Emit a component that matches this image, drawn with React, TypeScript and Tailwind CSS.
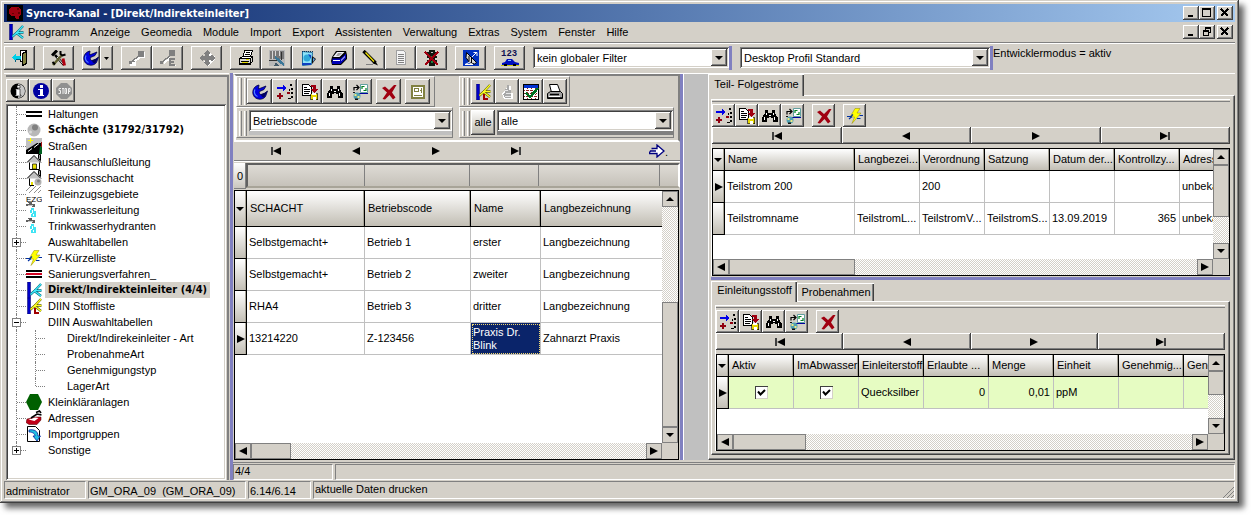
import React from 'react';
import type { ReactNode } from 'react';

const RAISED = 'bg-[#d4d0c8] shadow-[inset_-1px_-1px_0_#404040,inset_1px_1px_0_#fff,inset_-2px_-2px_0_#808080]';
const SUNKEN = 'shadow-[inset_1px_1px_0_#808080,inset_-1px_-1px_0_#fff,inset_2px_2px_0_#404040,inset_-2px_-2px_0_#d4d0c8]';
const GROUP = 'border border-t-white border-l-white border-r-[#808080] border-b-[#808080]';
const CHECKER = 'bg-[repeating-conic-gradient(#d4d0c8_0_25%,#fff_0_50%)] bg-[length:2px_2px]';

/* ---------- icons ---------- */

function Svg({ children, size = 16, smooth = false }: { children: ReactNode; size?: number; smooth?: boolean }) {
  return (
    <svg width={size} height={size} viewBox="0 0 16 16" fill="none" aria-hidden="true" className="shrink-0" shapeRendering={smooth ? 'auto' : 'crispEdges'}>
      {children}
    </svg>
  );
}

const icons: Record<string, ReactNode> = {
  app: (
    <Svg>
      <path fill="#000" d="M0 0h16v16H0z" />
      <path fill="#a00010" d="M4 2h7l3 3v5l-2 1v3H9l-1-3H4L2 8V4z" />
      <path fill="#600" d="M10 3h2v2h-2zM5 8h2v1H5zM11 7h2v2h-2z" />
    </Svg>
  ),
  branch: (
    <Svg smooth>
      <path fill="#0000c8" stroke="#000060" strokeWidth=".5" d="M1.500 0h3v16h-3z" />
      <path stroke="#006c80" strokeWidth="2.400" d="M4.500 12.500L8.500 9l6.500-7M8 8.500h7.500M8.500 9l6.500 5" />
      <path stroke="#40e8f8" strokeWidth="1.200" d="M4.500 12.500L8.500 9l6.500-7M8 8.500h7.500M8.500 9l6.500 5" />
    </Svg>
  ),
  branchYellow: (
    <Svg smooth>
      <path fill="#0000c8" stroke="#000060" strokeWidth=".5" d="M1.500 0h3v16h-3z" />
      <path stroke="#606000" strokeWidth="2.400" d="M4.500 11.500L8.500 8l6.500-7M8 7.500h7.500M8.500 8l6.500 5" />
      <path stroke="#ffff20" strokeWidth="1.200" d="M4.500 11.500L8.500 8l6.500-7M8 7.500h7.500M8.500 8l6.500 5" />
      <path fill="#a00000" d="M8 10h2v4h3v2H8z" />
    </Svg>
  ),
  exit: (
    <Svg>
      <path fill="#fff" stroke="#000" d="M8.500.5h6v11h-6z" />
      <path fill="#808040" stroke="#000" d="M10.500 3.500l4-2v12l-4 2z" />
      <path fill="#00d0e8" d="M0 7l4-4v3h5v3H4v3z" />
      <path stroke="#006080" d="M4 9.500h5M3.500 10v2" />
    </Svg>
  ),
  tools: (
    <Svg smooth>
      <path stroke="#000" strokeWidth="2.500" d="M4 5l9 10" />
      <path stroke="#fff" strokeWidth="1" d="M6 7l6 7" />
      <path stroke="#606030" strokeWidth="2.500" d="M11 5l-9 10" />
      <path stroke="#000" strokeWidth="3" d="M1 5.500l5-5" />
      <path stroke="#000" strokeWidth="2" d="M9.500 1v3l2 1.500 3-1M1.500 12l2.500 2.500" />
      <path stroke="#b00010" strokeWidth="3" d="M12 8.500l1.500 7" />
    </Svg>
  ),
  swirl: (
    <Svg smooth>
      <path fill="#0000e0" stroke="#000040" strokeWidth=".8" d="M7 1C1 2-1 9 2.500 13c3 3 8.500 3 11-.5L15.500 7l-3 2.500L9 10.500c-1.500 0-2-1.500-1.500-3L12 5.500 14 2 9 4l-2.500 1z" />
      <path fill="#000060" d="M9 10.500l6-3-2.500 5.500c-2 1-3-.5-3.500-2.500z" />
      <path stroke="#5080ff" strokeWidth="1.200" d="M3 5.500c-1.500 3 0 6 2.500 7" />
    </Svg>
  ),
  node: (
    <Svg>
      <path fill="#fff" d="M10 2h6v6h-6zM1 12h6v4H1z" />
      <path stroke="#fff" strokeWidth="2" d="M5 12l6-5" />
      <path fill="#808080" d="M9 1h6v6H9zM0 11h3v3H0zM4 11h2v1H4z" />
      <path stroke="#808080" strokeWidth="1.500" d="M3 11l7-5" />
    </Svg>
  ),
  nodeE: (
    <Svg>
      <path stroke="#fff" strokeWidth="2" d="M4 13l6-5M10 16h6" />
      <path fill="#808080" d="M9 0h6v6H9zM0 11h3v3H0zM9 8h6v2h-4v1h3v2h-3v1h4v2H9z" />
      <path stroke="#808080" strokeWidth="1.500" d="M3 11l7-5" />
    </Svg>
  ),
  move: (
    <Svg>
      <path fill="#fff" d="M9 1l4 4v3l3-2v3l-3 4-4 3-4-4z" />
      <path fill="#808080" d="M8 0l3 3v1h-1v2h2V5h1l3 3-3 3h-1v-1h-2v2h1v1l-3 3-3-3v-1h1v-2H4v1H3L0 8l3-3h1v1h2V4H5V3z" />
    </Svg>
  ),
  printer: (
    <Svg>
      <path fill="#fff" stroke="#000" d="M5.500 6.500l1-6h8l-2 6zM1.500 8.500l3-2h10l-2 2v6h-11z" />
      <path fill="#d8d8d0" stroke="#000" d="M1.500 8.500h11v5h-11zM12.500 8.500l2-2v5l-2 2z" />
      <path stroke="#000" d="M8 2.500h4M7 4.500h5M3 11.500h8" />
      <path fill="#e0d800" d="M8 9h3v1H8zM4 12h6v1H4z" />
    </Svg>
  ),
  plan: (
    <Svg>
      <path fill="#b8b8b8" d="M0 0h16v16H0z" />
      <path fill="#787878" d="M1 1h14v8H1z" />
      <path stroke="#d8d8d8" d="M3.500 1v8M6.500 1v5M10.500 1v5" />
      <path stroke="#303030" d="M0 10.500h9M12.500 2v8" />
      <path stroke="#3c7898" strokeWidth="2.500" d="M6 7l9 8" />
      <path fill="#405868" d="M7 12l3 4H5z" />
    </Svg>
  ),
  globe: (
    <Svg smooth>
      <path fill="#90e4f8" stroke="#2070a0" d="M2.500 1.500l10 1-1 12-9 1z" />
      <path stroke="#103050" strokeDasharray="1 1" d="M2 1.500h11" />
      <circle cx="7" cy="8" r="3.500" fill="#30a8d8" />
      <path fill="#1040c0" d="M2 13h9v2H2zM8 4l3 1v4z" />
      <path fill="#101010" d="M12 6l4 3-4 5z" />
      <path fill="#60a0e0" d="M13 8l2 1-2 3z" />
    </Svg>
  ),
  scanner: (
    <Svg smooth>
      <path fill="#000" d="M5 1h10l1 4v4l-6 6H1l-1-4 1-4z" />
      <path fill="#f0f0f8" d="M6 2h7.500l-5 5H2z" />
      <path fill="#0000b8" d="M1.500 8.500h8l5.500-5v5l-5.500 5.500H1z" />
      <path fill="#fff" d="M2 10h7v1H2zM10 10l4-4v1l-4 4z" />
      <path fill="#a0a0a0" d="M7 3h4L8 6H5z" />
    </Svg>
  ),
  pencil: (
    <Svg smooth>
      <path stroke="#000" strokeWidth="3.400" d="M1.500 1l12 12" />
      <path stroke="#f0e000" strokeWidth="1.400" d="M3.500 2.500l9 9.500" />
      <path fill="#000" d="M13 10.500l3 5-5.500-2.500z" />
      <path stroke="#808080" d="M4 14.500h7" />
    </Svg>
  ),
  doc: (
    <Svg>
      <path fill="#f4f4f4" stroke="#a0a0a0" d="M3.500.5h7l2 2v12h-9z" />
      <path stroke="#808080" d="M5 4.500h6M5 6.500h6M5 8.500h6M5 10.500h6M5 12.500h6" />
    </Svg>
  ),
  traffic: (
    <Svg>
      <path fill="#101810" d="M5 0h6v16H5zM2 2h12v2H2zM3 6h10v2H3zM3 10h10v2H3z" />
      <path fill="#208040" d="M7 6h2v2H7zM7 11h2v2H7z" />
      <path fill="#c0c0c0" d="M7 2h2v1H7z" />
      <path stroke="#a00010" strokeWidth="2" d="M1 2l13 13M14 2L1 15" />
    </Svg>
  ),
  dish: (
    <Svg smooth>
      <path fill="#0030c0" d="M0 0h16v16H0z" />
      <path fill="#d8d8d8" stroke="#000" d="M3.500 2.500l10 10-2 1.500-5-1.500-3.500-5z" />
      <path stroke="#000" d="M4 3l9 9M6 6v5M8.500 8v5" />
      <path stroke="#fff" d="M9 7l5-5M10.500 2.500H14V6M2 14.500l4-2 4 2z" />
    </Svg>
  ),
  car: (
    <svg width="18" height="18" viewBox="0 0 18 18" aria-hidden="true" className="shrink-0">
      <text x="0" y="7" fontFamily="Liberation Mono, monospace" fontWeight="700" fontSize="9" fill="#101050">123</text>
      <path fill="#0010c0" d="M1 14l3-1 2-3h5l3 3 4 1v2H1z" />
      <path fill="#c8c800" d="M0 16h18v1H0z" />
      <path fill="#000" d="M3 15h3v2H3zM12 15h3v2h-3z" />
      <path fill="#80c0ff" d="M7 11h3v1H7z" />
    </svg>
  ),
  addField: (
    <Svg>
      <path fill="#0000e8" d="M0 3h6V1l4 3-4 3V5H0z" />
      <path fill="#900010" d="M2 9h2v2h2v2H4v2H2v-2H0v-2h2z" />
      <path fill="#000" d="M13 0h2v2h-2zM14 4h2v2h-2zM12 5h1v2h-1zM14 8h2v2h-2zM14 12h2v2h-2zM11 14h3v1h-3z" />
      <path fill="#900010" d="M10 8h3v2h-3z" />
    </Svg>
  ),
  copySave: (
    <Svg>
      <path fill="#fff" stroke="#000" d="M.5.5h6l3 3v8h-9z" />
      <path stroke="#000" d="M2 3.500h3M2 5.500h6M2 7.500h6M2 9.500h5" />
      <path fill="#a00010" d="M9 1h5v4h2l-4 4-3-4h2V3H9z" />
      <path fill="#e8d800" stroke="#000" strokeWidth=".6" d="M8.500 9.500h7v6h-7z" />
      <path fill="#fff" d="M10 9h4v2h-4zM11 13h3v3h-3z" />
    </Svg>
  ),
  find: (
    <Svg>
      <path fill="#000" d="M3 2h3v3h4V2h3v3l3 5v4h-5v-4H9V9H7v1H5v4H0v-4l3-5z" />
      <path fill="#fff" d="M4 5h1v2H4zM2 9h1v3H2zM11 5h1v2h-1zM12 9h1v3h-1zM7 7h2v1H7z" />
    </Svg>
  ),
  clone: (
    <Svg smooth>
      <path fill="#fff" stroke="#60a0a0" d="M8.500.5h7v8h-7z" />
      <path stroke="#008020" strokeWidth="1.200" d="M10 5V2.500h2.500M14 4v2.500h-2.500" />
      <path stroke="#000" strokeWidth="1.200" d="M2 6.500v-3h4M4.500 1L7 3.500 4.500 6" />
      <path fill="#0000a0" d="M6 9h10v1H6z" />
      <circle cx="5" cy="12" r="3.500" fill="#50a0b0" />
      <path fill="#f0e880" d="M2.500 10h2v2h-2zM5.500 12h2v2h-2z" />
      <path fill="#101010" d="M3 14.500h3V16H3zM1 8h2v1H1z" />
    </Svg>
  ),
  cross: (
    <Svg smooth>
      <path fill="#a00010" d="M1 4l3-1.500L8 6l5-5h2.500L11 8.500l3.500 5L12 15.500 8.500 11 4 15.500 1.500 15 6 8.500z" />
    </Svg>
  ),
  form: (
    <Svg>
      <path fill="#fff" stroke="#808040" strokeWidth="2" d="M2 2h12v12H2z" />
      <path stroke="#808040" d="M4 4.500h4M4.500 4v4M8.500 4v4M4 7.500h5M10 6.500h2M4 11.500h8M11.500 4v5" />
    </Svg>
  ),
  hand: (
    <Svg>
      <path fill="#fff" d="M9 2h3v7h2v6H5l-2-5z" />
      <path fill="#a8a8a8" d="M8 1h2v5h2v8H6l-2-4 2-1V5h2z" />
      <path stroke="#e8e8e8" d="M6 6.500h3M7 9.500h5M6 12.500h6" />
    </Svg>
  ),
  gridCheck: (
    <Svg>
      <path fill="#fff" stroke="#000" d="M.5.5h15v15H.5z" />
      <path fill="#0030d0" d="M1 1h14v3H1z" />
      <path stroke="#902020" strokeDasharray="1 1" d="M1 6.500h14M1 9.500h14M1 12.500h14M4.500 4v11M8.500 4v11M12.500 4v11" />
      <path stroke="#007020" strokeWidth="2.500" d="M3 9l4 4 8-9" />
    </Svg>
  ),
  printer2: (
    <Svg smooth>
      <path fill="#fff" stroke="#000" d="M4.500 8.500l-2-8h8l3 8z" />
      <path fill="#a0a0a0" stroke="#000" d="M.5 9.500l3-2h10l2 2v5H.500z" />
      <path stroke="#000" strokeWidth="1.500" d="M1 14h14M3 10.500h9" />
      <path stroke="#fff" d="M2 12.500h11" />
    </Svg>
  ),
  infoBw: (
    <Svg smooth>
      <circle cx="8" cy="8" r="7.500" fill="#000" />
      <path fill="#c8c8c8" d="M8 1a7 7 0 010 14z" />
      <path fill="#fff" stroke="#000" strokeWidth=".6" d="M6 6h4v6h1v1H5v-1h1V7H5zM7 2.500h3V5H7z" />
    </Svg>
  ),
  infoBlue: (
    <Svg smooth>
      <circle cx="8" cy="8" r="8" fill="#0000a0" />
      <path fill="#fff" d="M5 6h5v6h1v1H5v-1h2V7H5zM7 2h3v3H7z" />
    </Svg>
  ),
  stop: (
    <Svg smooth>
      <path fill="#909090" d="M5 0h6l5 5v6l-5 5H5l-5-5V5z" />
      <path stroke="#f0f0f0" strokeWidth="1" d="M5 5.500H3v2h1.500v3H2.500M6 5.500h2M7 5v6M9 5.500h1.500v5H9zM12.500 11V5.500H14v3h-1.500" />
    </Svg>
  ),
  lightning: (
    <Svg smooth>
      <path fill="#ffff00" stroke="#908800" strokeWidth=".5" d="M8 .5h5L10 5h4L5 15.500 7.500 9H3z" />
      <path stroke="#0030a0" strokeWidth="1.200" d="M0 8.500h4l2-2M16 7.500h-3.500M2 11l3-2.500M10 10.500h3.500" />
    </Svg>
  ),
  lines: (
    <Svg>
      <path fill="#000" d="M0 5h16v2H0zM0 9h16v2H0z" />
    </Svg>
  ),
  ball: (
    <Svg smooth>
      <circle cx="8" cy="8" r="6.500" fill="#b8b8b8" />
      <circle cx="9" cy="5.500" r="3" fill="#808080" />
      <circle cx="4.500" cy="10" r="1.500" fill="#d8d8d8" />
    </Svg>
  ),
  road: (
    <Svg smooth>
      <path fill="#c0c0c0" d="M0 0h16v16H0z" />
      <path fill="#000" d="M0 12l11-7h5v8l-3 3H0z" />
      <path fill="#006020" d="M14 8h2v8h-3z" />
      <path fill="#a01010" d="M15 4h1v5h-1z" />
      <path stroke="#fff" d="M2 13.500l4-3M8 9.500l5-4" />
      <path stroke="#ffff00" d="M4.500 0v5M2 2.500h5" />
    </Svg>
  ),
  house: (
    <Svg smooth>
      <path fill="#fff" stroke="#000" d="M3.500 8v7.500h10V8" />
      <path fill="#c0c0c0" stroke="#000" d="M1 8.500l7-7 7 7" />
      <path fill="#a0a0a0" stroke="#000" d="M12.500.5h2v6l-2-2z" />
      <path fill="#e8e000" stroke="#000" strokeWidth=".7" d="M6.500 10h4v5h-4z" />
    </Svg>
  ),
  house2: (
    <Svg smooth>
      <path fill="#fff" stroke="#000" d="M8 15.500H3.500V8L8 3l5 5" />
      <path fill="#c0c0c0" stroke="#000" d="M1 8.500l7-7 7 7" />
      <path fill="#a0a0a0" stroke="#000" d="M12.500.5h2v6l-2-2z" />
      <path fill="#e8e000" d="M5 12h2v3H5z" />
      <circle cx="12" cy="12" r="3.500" fill="#b0b0b0" />
      <circle cx="12.500" cy="11" r="1.500" fill="#808080" />
    </Svg>
  ),
  ezg: (
    <svg width="16" height="16" viewBox="0 0 16 16" aria-hidden="true" className="shrink-0">
      <path fill="none" stroke="#909090" d="M0 5l5-5M3 7l7-7M8 7l7-7M12 7l3-3" />
      <text x="0" y="15.500" fontSize="8" fontFamily="Liberation Sans, sans-serif" fill="#000">EZG</text>
    </svg>
  ),
  tap: (
    <Svg>
      <path fill="#606060" d="M1 0h5v2h3v3H6V4H0V2h3z" />
      <path fill="#c8c8c8" d="M2 3h5v1H2z" />
      <path fill="#40e4f4" d="M5 6h3v3h2v6H5v-4H4V8h1z" />
      <path fill="#fff" d="M6 8h1v3H6zM7 12h1v2H7zM5 11h1v1H5z" />
    </Svg>
  ),
  redLine: (
    <Svg>
      <path fill="#000" d="M0 4h16v8H0z" />
      <path fill="#d00020" d="M0 7h16v2H0z" />
      <path fill="#fff" d="M0 6h16v1H0zM0 9h16v1H0z" />
    </Svg>
  ),
  hexagon: (
    <Svg smooth>
      <path fill="#006000" d="M4 0h8l4 8-4 8H4L0 8z" />
    </Svg>
  ),
  phone: (
    <Svg smooth>
      <path fill="#c00018" stroke="#400" strokeWidth=".5" d="M1 9l9-2h5v3l-4 4.500H3l-3-2z" />
      <path fill="#fff" d="M2.500 9.500l7-2 3 .5-4 3z" />
      <path stroke="#000" strokeWidth="1.600" d="M5 8l6-4 4.500 1M10 2.500L13.500 1 15 3" />
    </Svg>
  ),
  importDoc: (
    <Svg smooth>
      <path fill="#fff" stroke="#000" d="M1.500.5h8l4 4v11h-12z" />
      <path fill="#20c0e0" stroke="#0020a0" strokeWidth=".8" d="M3 4c5-1 9 1 9 6h2.500L11 15l-4-5h2c0-2-2-4-6-4z" />
    </Svg>
  ),
};

function Triangle({ dir, bar = false }: { dir: 'left' | 'right' | 'up' | 'down'; bar?: boolean }) {
  const shapes = {
    left: 'M8 0v8L0 4z',
    right: 'M0 0v8l8-4z',
    up: 'M0 6h8L4 2z',
    down: 'M0 2h8L4 6z',
  };
  return (
    <span className="flex items-center">
      {bar && dir === 'left' && <span className="h-2 w-0.5 bg-[#404040]" />}
      <svg width="8" height="8" viewBox="0 0 8 8" aria-hidden="true">
        <path d={shapes[dir]} fill="#000" />
      </svg>
      {bar && dir === 'right' && <span className="h-2 w-0.5 bg-[#404040]" />}
    </span>
  );
}

/* ---------- controls ---------- */

function ToolButton({ icon, label, className = 'h-6 w-[31px]' }: { icon: string; label: string; className?: string }) {
  return (
    <button type="button" aria-label={label} className={`flex shrink-0 items-center justify-center ${RAISED} ${className}`}>
      {icons[icon]}
    </button>
  );
}

function Combo({ label, value, className }: { label: string; value: string; className: string }) {
  return (
    <div className={`relative shrink-0 ${className}`}>
      <select aria-label={label} className={`h-[21px] w-full appearance-none bg-white pt-px pl-1 text-[11px] leading-[17px] text-black outline-none ${SUNKEN}`}>
        <option>{value}</option>
      </select>
      <span className={`pointer-events-none absolute top-0.5 right-0.5 flex h-[17px] w-4 items-center justify-center ${RAISED}`}>
        <Triangle dir="down" />
      </span>
    </div>
  );
}

function Gripper() {
  return (
    <div className="flex w-2 shrink-0 gap-0.5 self-stretch py-px">
      <span className="w-[3px] border-x border-l-white border-r-[#808080]" />
      <span className="w-[3px] border-x border-l-white border-r-[#808080]" />
    </div>
  );
}

type WindowGlyph = 'min' | 'max' | 'restore' | 'close';

function WindowButton({ kind, label }: { kind: WindowGlyph; label: string }) {
  const glyph = {
    min: <path d="M2 7h5v2H2z" fill="#000" />,
    max: <path d="M.5.5h8v8h-8zM1 1.500h8" stroke="#000" />,
    restore: <path d="M3.500 3V.5h5v5H6M3 1.500h6M1.500 3.500h5v5h-5zM1 4.500h6" stroke="#000" />,
    close: <path d="M1 1l7 7M8 1L1 8" stroke="#000" strokeWidth="1.500" />,
  }[kind];
  return (
    <button type="button" aria-label={label} className={`flex h-3.5 w-4 items-center justify-center ${RAISED}`}>
      <svg width="10" height="10" viewBox="0 0 10 10" fill="none" shapeRendering="crispEdges" aria-hidden="true">{glyph}</svg>
    </button>
  );
}

function WindowButtons({ middle }: { middle: WindowGlyph }) {
  return (
    <div className="ml-auto flex pr-0.5">
      <WindowButton kind="min" label="Minimieren" />
      <WindowButton kind={middle} label="Maximieren" />
      <span className="w-0.5" />
      <WindowButton kind="close" label="Schließen" />
    </div>
  );
}

const SCROLL_BUTTON = 'flex size-4 shrink-0 items-center justify-center border border-[#808080] bg-[#d4d0c8]';

function ScrollBar({ vertical = false, start, size }: { vertical?: boolean; start: number; size: number }) {
  const at = (n: number) => (vertical ? { height: `${n}%` } : { width: `${n}%` });
  return (
    <div className={`flex ${vertical ? 'min-h-0 w-4 flex-1 flex-col' : 'h-4 w-full'} ${CHECKER}`}>
      <button type="button" aria-label="Zurück blättern" className={SCROLL_BUTTON}>
        <Triangle dir={vertical ? 'up' : 'left'} />
      </button>
      <div className={`flex min-h-0 flex-1 ${vertical ? 'flex-col' : ''}`}>
        <div style={at(start)} />
        <div style={at(size)} className="border border-[#808080] bg-[#d4d0c8]" />
      </div>
      <button type="button" aria-label="Weiter blättern" className={SCROLL_BUTTON}>
        <Triangle dir={vertical ? 'down' : 'right'} />
      </button>
    </div>
  );
}

interface Column {
  label: string;
  width: number;
  align?: 'right' | 'center';
}

interface GridProps {
  columns: Column[];
  rows: ReactNode[][];
  active: number;
  tall?: boolean;
  rowColor?: string;
  selected?: number;
  v: [number, number];
  h: [number, number];
}

const HEAD = 'border-r border-b border-black bg-linear-to-b from-white to-[#c2beb4] font-normal shadow-[inset_-1px_0_0_#a8a498]';

function Grid({ columns, rows, active, tall = false, rowColor = 'bg-white', selected, v, h }: GridProps) {
  const total = columns.reduce((sum, c) => sum + c.width, 12);
  return (
    <div className="flex min-h-0 flex-1 border border-black bg-white">
      <div className="flex min-w-0 flex-1 flex-col">
        <div className="min-h-0 flex-1 overflow-hidden">
          <table className="table-fixed border-separate border-spacing-0 text-left whitespace-nowrap" style={{ width: total }}>
            <colgroup>
              <col className="w-3" />
              {columns.map((c) => (
                <col key={c.label} style={{ width: c.width }} />
              ))}
            </colgroup>
            <thead>
              <tr className={tall ? 'h-9' : 'h-[22px]'}>
                <th className={`pl-px ${HEAD}`}><Triangle dir="down" /></th>
                {columns.map((c) => (
                  <th key={c.label} className={`pr-0 pl-[3px] ${HEAD}`}>{c.label}</th>
                ))}
              </tr>
            </thead>
            <tbody>
              {rows.map((row, r) => (
                <tr key={r} className={`h-8 ${rowColor}`}>
                  <td className={`pl-0.5 ${HEAD}`}>{r === active && <Triangle dir="right" />}</td>
                  {row.map((cell, c) => {
                    const picked = r === active && c === selected;
                    const align = columns[c].align === 'right' ? 'pr-[3px] text-right' : columns[c].align === 'center' ? 'text-center' : 'pr-0 pl-0.5';
                    return (
                      <td
                        key={c}
                        className={`border-r border-b border-[#c0c0c0] ${align} ${picked ? 'bg-[#0a246a] leading-[13px] whitespace-normal text-white outline outline-dotted -outline-offset-2 outline-[#f0d870]' : ''}`}
                      >
                        {cell}
                      </td>
                    );
                  })}
                </tr>
              ))}
            </tbody>
          </table>
        </div>
        <ScrollBar start={h[0]} size={h[1]} />
      </div>
      <div className="flex w-4 shrink-0 flex-col bg-[#d4d0c8] pb-4">
        <ScrollBar vertical start={v[0]} size={v[1]} />
      </div>
    </div>
  );
}

function NavButtons() {
  const cls = `flex h-[17px] flex-1 items-center justify-center ${RAISED}`;
  return (
    <div className="flex">
      <button type="button" aria-label="Erster" className={cls}><Triangle dir="left" bar /></button>
      <button type="button" aria-label="Vorheriger" className={cls}><Triangle dir="left" /></button>
      <button type="button" aria-label="Nächster" className={cls}><Triangle dir="right" /></button>
      <button type="button" aria-label="Letzter" className={cls}><Triangle dir="right" bar /></button>
    </div>
  );
}

function DetailTools({ extra = false }: { extra?: boolean }) {
  const size = 'h-[23px] w-[23px]';
  return (
    <div className="flex border-t border-[#808080] pt-0.5">
      <ToolButton icon="addField" label="Hinzufügen" className={size} />
      <ToolButton icon="copySave" label="Kopieren" className={size} />
      <ToolButton icon="find" label="Suchen" className={size} />
      <ToolButton icon="clone" label="Aktualisieren" className={size} />
      <span className="w-2" />
      <ToolButton icon="cross" label="Löschen" className={size} />
      {extra && <span className="w-2" />}
      {extra && <ToolButton icon="lightning" label="Ausführen" className={size} />}
    </div>
  );
}

function Tick({ label }: { label: string }) {
  return (
    <span className="inline-grid size-[13px] align-middle">
      <input type="checkbox" defaultChecked aria-label={label} className="peer col-start-1 row-start-1 size-[13px] appearance-none bg-white shadow-[inset_1px_1px_0_#404040,inset_-1px_-1px_0_#d4d0c8]" />
      <svg viewBox="0 0 13 13" fill="none" aria-hidden="true" className="pointer-events-none invisible col-start-1 row-start-1 size-[13px] peer-checked:visible">
        <path d="M3 5.500l2.500 3L10 4" stroke="#000" strokeWidth="2" />
      </svg>
    </span>
  );
}

/* ---------- tree ---------- */

interface TreeItem {
  label: string;
  icon?: string;
  bold?: boolean;
  selected?: boolean;
  expander?: '+' | '-';
  child?: boolean;
  last?: boolean;
}

const tree: TreeItem[] = [
  { label: 'Haltungen', icon: 'lines' },
  { label: 'Schächte (31792/31792)', icon: 'ball', bold: true },
  { label: 'Straßen', icon: 'road' },
  { label: 'Hausanschlußleitung', icon: 'house' },
  { label: 'Revisionsschacht', icon: 'house2' },
  { label: 'Teileinzugsgebiete', icon: 'ezg' },
  { label: 'Trinkwasserleitung', icon: 'tap' },
  { label: 'Trinkwasserhydranten', icon: 'tap' },
  { label: 'Auswahltabellen', expander: '+' },
  { label: 'TV-Kürzelliste', icon: 'lightning' },
  { label: 'Sanierungsverfahren_', icon: 'redLine' },
  { label: 'Direkt/Indirekteinleiter (4/4)', icon: 'branch', bold: true, selected: true },
  { label: 'DIIN Stoffliste', icon: 'branchYellow' },
  { label: 'DIIN Auswahltabellen', expander: '-' },
  { label: 'Direkt/Indirekeinleiter - Art', child: true },
  { label: 'ProbenahmeArt', child: true },
  { label: 'Genehmigungstyp', child: true },
  { label: 'LagerArt', child: true, last: true },
  { label: 'Kleinkläranlagen', icon: 'hexagon' },
  { label: 'Adressen', icon: 'phone' },
  { label: 'Importgruppen', icon: 'importDoc' },
  { label: 'Sonstige', expander: '+', last: true },
];

function Stub({ last }: { last?: boolean }) {
  return (
    <span className="flex h-4 w-2.5 shrink-0">
      <span className={`w-px border-l border-dotted border-[#808080] ${last ? 'h-2' : 'h-4'}`} />
      <span className="mt-2 h-px flex-1 border-t border-dotted border-[#808080]" />
    </span>
  );
}

function TreeRow({ item }: { item: TreeItem }) {
  return (
    <li className="relative flex h-4 items-center pl-2">
      {item.child && <span className="h-4 w-[19px] shrink-0 border-l border-dotted border-[#808080]" />}
      <Stub last={item.last} />
      {item.expander && (
        <button type="button" aria-label={`${item.label} umschalten`} className="absolute left-1 flex size-[9px] items-center justify-center border border-[#808080] bg-white">
          <svg width="5" height="5" viewBox="0 0 5 5" aria-hidden="true" shapeRendering="crispEdges">
            <path d={item.expander === '+' ? 'M0 2h5v1H0zM2 0h1v5H2z' : 'M0 2h5v1H0z'} />
          </svg>
        </button>
      )}
      {item.icon ? icons[item.icon] : <span className="w-4 shrink-0" />}
      <span className={`ml-[3px] px-[3px] leading-4 whitespace-nowrap ${item.bold ? "font-['DejaVu_Sans_Condensed','DejaVu_Sans',sans-serif] font-bold" : ''} ${item.selected ? 'bg-[#d4d0c8]' : ''}`}>
        {item.label}
      </span>
    </li>
  );
}

function TreePanel() {
  return (
    <aside className="flex w-[225px] shrink-0 flex-col border-t border-white pt-px pl-0.5">
      <div className="flex flex-1 flex-col border-t-2 border-r-2 border-t-[#808080] border-r-[#808080] pr-px">
        <div className="flex pt-0.5">
          <ToolButton icon="infoBw" label="Info" className="size-[23px]" />
          <ToolButton icon="infoBlue" label="Information" className="size-[23px]" />
          <ToolButton icon="stop" label="Stopp" className="size-[23px]" />
        </div>
        <ul className={`mt-0.5 flex-1 bg-white p-0.5 ${SUNKEN}`}>
          {tree.map((item) => (
            <TreeRow key={item.label} item={item} />
          ))}
        </ul>
      </div>
    </aside>
  );
}

/* ---------- centre ---------- */

function CenterPanel() {
  const size = 'size-[25px]';
  const small = 'h-[25px] w-6';
  return (
    <section className="flex w-[447px] shrink-0 flex-col pl-px">
      <div className="grid shrink-0 grid-cols-[223px_1fr] border-2 border-t-[#808080] border-r-[#808080] border-b-white border-l-white pr-1 pb-0.5">
        <div className={`flex w-[199px] items-center pl-0.5 ${GROUP} h-[31px]`}>
          <Gripper />
          <ToolButton icon="swirl" label="Neu laden" className={size} />
          <ToolButton icon="addField" label="Hinzufügen" className={size} />
          <ToolButton icon="copySave" label="Kopieren" className={size} />
          <ToolButton icon="find" label="Suchen" className={size} />
          <ToolButton icon="clone" label="Aktualisieren" className={size} />
          <span className="w-1" />
          <ToolButton icon="cross" label="Löschen" className={size} />
          <span className="w-1" />
          <ToolButton icon="form" label="Formular" className={size} />
        </div>
        <div className={`flex w-[111px] items-center pl-0.5 ${GROUP} h-[31px]`}>
          <Gripper />
          <span className="w-px" />
          <ToolButton icon="branchYellow" label="Stoffliste" className={small} />
          <ToolButton icon="hand" label="Zeigen" className={small} />
          <ToolButton icon="gridCheck" label="Auswahl" className={small} />
          <ToolButton icon="printer2" label="Drucken" className={small} />
        </div>
        <div className={`flex h-[31px] w-[217px] items-start pt-0.5 pl-0.5 ${GROUP}`}>
          <Gripper />
          <div className="ml-0.5 flex-1 bg-[#c0c0c0] pb-1">
            <Combo label="Suchfeld" value="Betriebscode" className="w-full" />
          </div>
        </div>
        <div className={`flex h-[31px] w-full items-start pt-0.5 pl-0.5 ${GROUP}`}>
          <Gripper />
          <button type="button" className={`ml-px h-[25px] w-6 shrink-0 bg-linear-to-b from-white to-[#bcb8ac] ${RAISED}`}>alle</button>
          <div className="ml-0.5 flex-1 bg-[#808080] pb-1">
            <Combo label="Filter" value="alle" className="w-full" />
          </div>
        </div>
      </div>
      <div className="flex h-[19px] shrink-0 items-center border-b border-[#808080] pr-3 pl-0.5">
        <button type="button" aria-label="Erster Datensatz" className="flex w-20 justify-center"><Triangle dir="left" bar /></button>
        <button type="button" aria-label="Vorheriger Datensatz" className="flex w-20 justify-center"><Triangle dir="left" /></button>
        <button type="button" aria-label="Nächster Datensatz" className="flex w-20 justify-center"><Triangle dir="right" /></button>
        <button type="button" aria-label="Letzter Datensatz" className="flex w-20 justify-center"><Triangle dir="right" bar /></button>
        <button type="button" aria-label="Gehe zu" className="ml-auto flex items-end">
          <svg width="16" height="14" viewBox="0 0 16 14" fill="#fff" stroke="#000080" strokeWidth="1.300" aria-hidden="true">
            <path d="M2.500 4.500H8V1l7 6-7 6V9.500H0l1.500-2.500H7" />
          </svg>
          <span className="leading-3">.</span>
        </button>
      </div>
      <div className="flex h-[29px] shrink-0 border-t border-white py-px">
        <div className="flex w-3 items-center justify-center bg-linear-to-b from-white to-[#c8c4bc] shadow-[inset_-1px_-1px_0_#808080]">0</div>
        <div className="mb-px grid flex-1 grid-cols-[117px_105px_69px_121px_1fr] border-2 border-t-[#606060] border-r-white border-b-[#a8a498] border-l-[#606060]">
          {[0, 1, 2, 3, 4].map((n) => (
            <div key={n} className="border-r border-[#808080] bg-linear-to-b from-[#dedbd5] to-[#c6c2ba] last:border-r-0" />
          ))}
        </div>
      </div>
      <div className="flex min-h-0 flex-1 flex-col pr-px">
        <Grid
          tall
          active={3}
          selected={2}
          v={[43, 57]}
          h={[0, 10]}
          columns={[
            { label: 'SCHACHT', width: 118 },
            { label: 'Betriebscode', width: 106 },
            { label: 'Name', width: 70 },
            { label: 'Langbezeichnung', width: 140 },
          ]}
          rows={[
            ['Selbstgemacht+', 'Betrieb 1', 'erster', 'Langbezeichnung'],
            ['Selbstgemacht+', 'Betrieb 2', 'zweiter', 'Langbezeichnung'],
            ['RHA4', 'Betrieb 3', 'dritter', 'Langbezeichnung'],
            ['13214220', 'Z-123456', 'Praxis Dr. Blink', 'Zahnarzt Praxis'],
          ]}
        />
      </div>
    </section>
  );
}

/* ---------- detail tabs ---------- */

const TAB = 'shrink-0 border-t border-l border-t-white border-l-white shadow-[inset_-1px_0_0_#404040,inset_-2px_0_0_#808080] bg-[#d4d0c8]';
const PAGE = 'border border-t-white border-l-white border-r-[#404040] border-b-[#404040] shadow-[inset_-1px_-1px_0_#808080]';

function DetailPanel() {
  return (
    <section className="flex min-w-0 flex-1 flex-col">
      <div role="tablist" className="flex h-[21px] shrink-0">
        <button type="button" role="tab" aria-selected="true" className={`relative -mb-px w-[96px] pb-0.5 ${TAB}`}>Teil- Folgeströme</button>
      </div>
      <div className={`flex min-h-0 flex-1 flex-col p-[3px] pr-1 pb-1 pl-0.5 ${PAGE}`}>
        <div className="flex h-[177px] shrink-0 flex-col border-t border-l border-white pt-px">
          <DetailTools extra />
          <NavButtons />
          <div className="mt-1 flex min-h-0 flex-1 flex-col">
            <Grid
              active={0}
              v={[0, 67]}
              h={[0, 27]}
              columns={[
                { label: 'Name', width: 130 },
                { label: 'Langbezei...', width: 65 },
                { label: 'Verordnung', width: 65 },
                { label: 'Satzung', width: 65 },
                { label: 'Datum der...', width: 65 },
                { label: 'Kontrollzy...', width: 65, align: 'right' },
                { label: 'Adresse', width: 65 },
              ]}
              rows={[
                ['Teilstrom 200', '', '200', '', '', '', 'unbekannt'],
                ['Teilstromname', 'TeilstromL...', 'TeilstromV...', 'TeilstromS...', '13.09.2019', '365', 'unbekannt'],
              ]}
            />
          </div>
        </div>
        <div className="mt-px h-[3px] shrink-0 bg-[#8080c0]" />
        <div role="tablist" className="flex h-[21px] shrink-0 items-end pt-px">
          <button type="button" role="tab" aria-selected="true" className={`relative -mb-px h-[21px] w-[86px] pb-1 ${TAB}`}>Einleitungsstoff</button>
          <button type="button" role="tab" aria-selected="false" className={`h-[18px] w-[77px] ${TAB}`}>Probenahmen</button>
        </div>
        <div className={`flex min-h-0 flex-1 flex-col p-[3px] pr-1 ${PAGE}`}>
          <div className="flex min-h-0 flex-1 flex-col border-t border-l border-white pt-px">
            <DetailTools />
            <NavButtons />
            <div className="mt-1 flex min-h-0 flex-1 flex-col">
              <Grid
                active={0}
                rowColor="bg-[#e6fcc2]"
                v={[0, 50]}
                h={[0, 16]}
                columns={[
                  { label: 'Aktiv', width: 65, align: 'center' },
                  { label: 'ImAbwasser', width: 65, align: 'center' },
                  { label: 'Einleiterstoff', width: 65 },
                  { label: 'Erlaubte ...', width: 65, align: 'right' },
                  { label: 'Menge', width: 65, align: 'right' },
                  { label: 'Einheit', width: 65 },
                  { label: 'Genehmig...', width: 65 },
                  { label: 'Genehmigt', width: 65 },
                ]}
                rows={[[<Tick label="Aktiv" />, <Tick label="ImAbwasser" />, 'Quecksilber', '0', '0,01', 'ppM', '', '']]}
              />
            </div>
          </div>
        </div>
      </div>
    </section>
  );
}

/* ---------- shell ---------- */

const menu = ['Programm', 'Anzeige', 'Geomedia', 'Module', 'Import', 'Export', 'Assistenten', 'Verwaltung', 'Extras', 'System', 'Fenster', 'Hilfe'];
const CELL = 'truncate border border-t-[#808080] border-l-[#808080] border-r-white border-b-white pl-px';

export default function App() {
  return (
    <div className="h-screen bg-white pr-3 pb-3 font-['Liberation_Sans',Arial,sans-serif] text-[11px] leading-[13px] text-black">
      <div className="flex h-full flex-col bg-[#d4d0c8] p-1 shadow-[inset_-1px_-1px_0_#404040,inset_1px_1px_0_#d4d0c8,inset_-2px_-2px_0_#808080,inset_2px_2px_0_#fff,5px_5px_6px_0_rgba(0,0,0,0.6)]">
        <header className="flex h-[18px] shrink-0 items-center bg-linear-to-r from-[#0a246a] to-[#a6caf0] pl-[3px] text-white">
          {icons.app}
          <h1 className="ml-[3px] font-['DejaVu_Sans_Condensed','DejaVu_Sans',sans-serif] text-[11px] font-bold whitespace-nowrap">Syncro-Kanal - [Direkt/Indirekteinleiter]</h1>
          <WindowButtons middle="max" />
        </header>
        <nav className="flex h-[21px] shrink-0 items-center border-b border-[#808080] pl-1">
          {icons.branch}
          <ul className="ml-1 flex gap-[11px]">
            {menu.map((m) => (
              <li key={m}><button type="button">{m}</button></li>
            ))}
          </ul>
          <WindowButtons middle="restore" />
        </nav>
        <div className="flex h-[30px] shrink-0 items-start border-t border-white pt-0.5">
          <div className="flex gap-2">
            <ToolButton icon="exit" label="Beenden" />
            <ToolButton icon="tools" label="Werkzeuge" />
            <div className="flex">
              <ToolButton icon="swirl" label="Neu laden" className="h-6 w-[18px]" />
              <button type="button" aria-label="Optionen" className={`flex h-6 w-[13px] items-center justify-center ${RAISED}`}>
                <svg width="5" height="3" viewBox="0 0 5 3" aria-hidden="true"><path d="M0 0h5L2.500 3z" /></svg>
              </button>
            </div>
            <div className="flex">
              <ToolButton icon="node" label="Knoten" />
              <ToolButton icon="nodeE" label="Knoten E" />
            </div>
            <ToolButton icon="move" label="Verschieben" />
            <div className="flex">
              <ToolButton icon="printer" label="Drucken" />
              <ToolButton icon="plan" label="Plan" />
              <ToolButton icon="globe" label="Karte" />
              <ToolButton icon="scanner" label="Scanner" />
              <ToolButton icon="pencil" label="Bearbeiten" />
              <ToolButton icon="doc" label="Dokument" />
              <ToolButton icon="traffic" label="Sperren" />
            </div>
            <ToolButton icon="dish" label="GPS" />
            <ToolButton icon="car" label="Fahrzeug" />
            <Combo label="Globaler Filter" value="kein globaler Filter" className="mt-px w-[196px]" />
          </div>
          <span className="h-6 w-[3px] bg-[#8080c0]" />
          <Combo label="Desktop Profil" value="Desktop Profil Standard" className="mt-px ml-2 w-[250px]" />
          <span className="h-6 w-[3px] bg-[#8080c0]" />
          <p className="leading-[15px] whitespace-nowrap">Entwicklermodus = aktiv</p>
        </div>
        <main className="flex min-h-0 flex-1">
          <TreePanel />
          <span className="ml-px w-[3px] shrink-0 bg-[#8080c0]" />
          <div className="flex min-w-0 flex-1 flex-col">
            <div className="flex min-h-0 flex-1 border-t border-white">
              <CenterPanel />
              <span className="w-[3px] shrink-0 bg-[#8080c0]" />
              <span className="w-[25px] shrink-0 border-l border-white bg-[#c0c0c0]" />
              <DetailPanel />
            </div>
            <div className="mt-0.5 flex h-[18px] shrink-0 gap-0.5 border-t border-[#808080] pt-px">
              <div className={`w-[100px] ${CELL}`}>4/4</div>
              <div className={`flex-1 ${CELL}`} />
            </div>
          </div>
        </main>
        <footer className="mt-px flex h-[18px] shrink-0 gap-0.5 leading-[18px]">
          <div className={`w-[82px] ${CELL}`}>administrator</div>
          <div className={`w-[158px] whitespace-pre ${CELL}`}>{'GM_ORA_09  (GM_ORA_09)'}</div>
          <div className={`w-[63px] ${CELL}`}>6.14/6.14</div>
          <div className={`flex flex-1 items-end justify-between ${CELL}`}>
            <span>aktuelle Daten drucken</span>
            <svg width="12" height="12" viewBox="0 0 12 12" stroke="#808080" aria-hidden="true">
              <path d="M1 12L12 1M5 12l7-7M9 12l3-3" />
            </svg>
          </div>
        </footer>
      </div>
    </div>
  );
}
